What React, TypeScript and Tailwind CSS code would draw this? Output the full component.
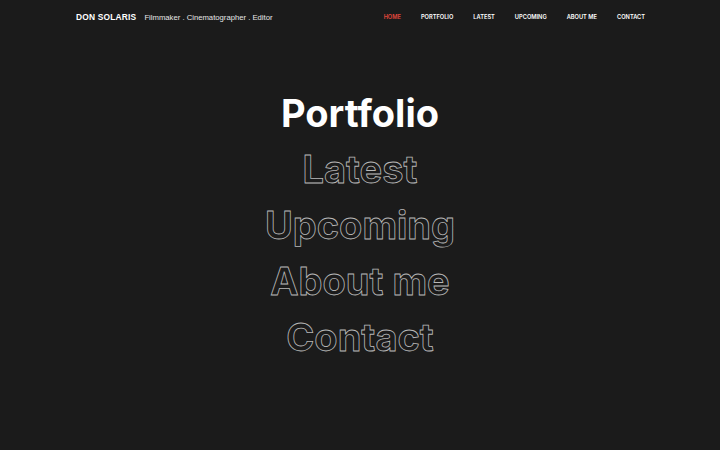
import React from "react";

const nav = ["HOME", "PORTFOLIO", "LATEST", "UPCOMING", "ABOUT ME", "CONTACT"];
const items = ["Latest", "Upcoming", "About me", "Contact"];

export default function App() {
  return (
    <div className="w-[720px] h-[450px] bg-[#1b1b1b] overflow-hidden antialiased">
      <header className="flex items-center justify-between pl-[76px] pr-[75px] h-[34px]">
        <div className="flex items-baseline gap-[8px] font-['Liberation_Sans',Arial,sans-serif]">
          <span className="text-white text-[8.4px] font-bold tracking-[0.2px]">DON SOLARIS</span>
          <span className="text-[#e6e6e6] text-[7.7px]">Filmmaker . Cinematographer . Editor</span>
        </div>
        <nav className="flex items-center gap-[20px] font-['Inter',sans-serif] text-[5.7px] font-semibold">
          {nav.map((n, i) => (
            <span key={n} className={i === 0 ? "text-[#e2473c]" : "text-white"}>
              {n}
            </span>
          ))}
        </nav>
      </header>
      <main className="flex flex-col items-center pt-[51px] font-['Inter',sans-serif] font-bold text-[38px] leading-[56px]">
        <span className="text-white">Portfolio</span>
        {items.map((t) => (
          <span
            key={t}
            className="text-transparent [-webkit-text-stroke:0.8px_#b8b8b8]"
          >
            {t}
          </span>
        ))}
      </main>
    </div>
  );
}
